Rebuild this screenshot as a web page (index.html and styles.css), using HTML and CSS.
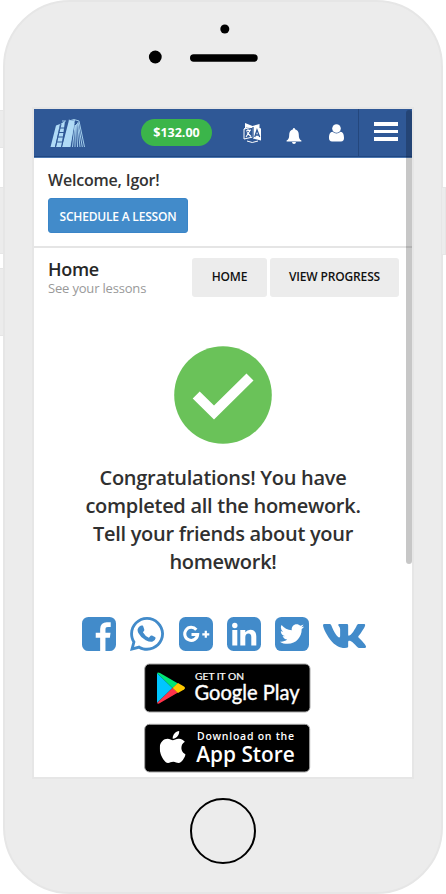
FILE: index.html
```html
<!DOCTYPE html>
<html lang="en">
<head>
<meta charset="utf-8">
<title>Home</title>
<link rel="stylesheet" href="styles.css">
</head>
<body>
<div class="phone">
  <span class="side-button mute"></span>
  <span class="side-button volume-up"></span>
  <span class="side-button volume-down"></span>
  <span class="side-button power"></span>
  <div class="phone-top">
    <svg width="436" height="105" viewBox="5 2 436 105"><circle cx="224.8" cy="29" r="4.5"/><circle cx="155.3" cy="57" r="6.4"/><rect x="190" y="54.3" width="67.7" height="7.5" rx="3.7"/></svg>
  </div>
  <main class="screen">
    <header class="topbar">
      <svg class="logo" width="36" height="30" viewBox="0 0 36 30">
        <path fill="#b0dbf6" d="M.5 29 6 7.500 10 6 5 29ZM6 29 10.500 6 15 3 11.500 29ZM12 29 18.500 4 19 1l1 2 5-1L20 29Z"/>
        <path fill="none" stroke="#b0dbf6" stroke-width=".9" d="M19 3Q24 0 29 3L34.500 29M20 29 24 5M22.500 29 25 7M25 29 25.500 7M27.500 29 26.500 6M30 29 27.500 5M32.300 29 28 4M12 3l4 0"/>
        <path fill="none" stroke="#2f5896" d="M10 10h5M9 14.500h6M8 19h6M7 24h6M5.500 29 11 6M11.500 29 16.500 6"/>
      </svg>
      <span class="balance">$132.00</span>
      <svg class="translate" width="19" height="21" viewBox="0 0 19 21">
        <path fill="#fff" d="M2 0 9.500 3 16.500 1v4l1.500 .5v12L10 15.500V5L2 4.500Z"/>
        <path fill="none" stroke="#fff" d="M2.500 3v2L1 6v10l9-2V4L1 6M4 18q5 3 11 0"/>
        <path fill="none" stroke="#fff" stroke-width="1.100" d="M3 8l5-1M5 6v2M7 7.500 3 14M4 9.500l4 4"/>
        <path fill="none" stroke="#2f5896" stroke-width="1.300" d="M11.700 14 14 7l2.700 7M12.500 12h3.500M10 4v11"/>
      </svg>
      <svg class="bell" width="16" height="17" viewBox="0 0 16 17"><path fill="#fff" d="M8 0q1 0 1 1.200C12 2 12.800 4.500 12.800 7c0 3 .8 4.700 2.600 5.500v1H.6v-1C2.400 11.700 3.200 10 3.200 7 3.200 4.500 4 2 7 1.200 7 .3 7.300 0 8 0ZM6 14h4q-.2 2-2 2t-2-2Z"/></svg>
      <svg class="user" width="15" height="18" viewBox="0 0 15 18"><path fill="#fff" d="M3.500 7.800C1 8 0 10.500 0 14c0 2.300 1 3.500 3 3.500h9c2 0 3-1.200 3-3.500 0-3.500-1-6-3.500-6.200q-4 3.200-8 0Z"/><circle cx="7.500" cy="4.500" r="4.300" fill="#fff"/></svg>
      <span class="menu"><i></i><i></i><i></i></span>
    </header>
    <section class="welcome">
      <h2>Welcome, Igor!</h2>
      <a class="schedule">SCHEDULE A LESSON</a>
    </section>
    <section class="heading">
      <div class="title"><h1>Home</h1><p>See your lessons</p></div>
      <a class="tab home">HOME</a><a class="tab progress">VIEW PROGRESS</a>
    </section>
    <section class="done">
      <svg class="check" width="98" height="98" viewBox="0 0 98 98"><circle cx="49" cy="49" r="48.800" fill="#6ac259"/><path fill="#fff" d="M18.700 52.500 25.700 45.500 40 59.500 72.500 27.500 79.500 34.500 40 73.500Z"/></svg>
      <p class="message">Congratulations! You have<br>completed all the homework.<br>Tell your friends about your<br>homework!</p>
    </section>
    <nav class="social">
      <svg width="34" height="34" viewBox="128 128 1536 1536"><path d="M1376 128q119 0 203.500 84.500t84.500 203.500v960q0 119-84.500 203.500t-203.500 84.500h-188v-595h199l30-232h-229v-148q0-56 23.500-84t91.500-28l122-1v-207q-63-9-178-9-136 0-217.500 80t-81.500 226v171h-200v232h200v595h-532q-119 0-203.500-84.500t-84.500-203.500v-960q0-119 84.500-203.500t203.500-84.500h960z"/></svg>
      <svg width="34" height="34" viewBox="0 32 448 448"><path d="M380.900 97.100C339 55.100 283.200 32 223.900 32c-122.400 0-222 99.600-222 222 0 39.100 10.200 77.300 29.600 111L0 480l117.700-30.900c32.400 17.700 68.900 27 106.100 27h.1c122.300 0 224.100-99.600 224.100-222 0-59.300-25.200-115-67.100-157zm-157 341.600c-33.200 0-65.700-8.900-94-25.700l-6.700-4-69.800 18.300L72 359.200l-4.400-7c-18.500-29.400-28.200-63.300-28.200-98.200 0-101.700 82.800-184.500 184.600-184.500 49.300 0 95.600 19.200 130.400 54.100 34.800 34.900 56.200 81.200 56.100 130.500 0 101.800-84.900 184.600-186.600 184.600z"/><path d="M128 155q18-18 36-10 8 3 11 12l13 40q4 10-5 20l-13 16q28 50 79 73l22-26q9-9 19-4l38 19q11 6 9 18-4 32-38 43-35 11-92-18-66-35-97-96-28-53 18-87Z"/></svg>
      <svg width="34" height="34" viewBox="0 0 34 34"><rect width="34" height="34" rx="6.500"/><path fill="none" stroke="#fff" stroke-width="3" d="M17.300 12.800A6.500 6.500 0 1 0 18.700 17.500H12.500"/><path fill="none" stroke="#fff" stroke-width="2.200" d="M26.800 13.800v7M23.300 17.300h7"/></svg>
      <svg width="34" height="34" viewBox="0 0 34 34"><rect width="34" height="34" rx="6.500"/><circle cx="7.800" cy="8.500" r="2.700" fill="#fff"/><path fill="#fff" d="M5.300 13h5v15.500h-5zM13.300 13h5v2.200q1.700-2.500 5-2.500c4 0 6 2.500 6 6.800v9h-5v-8.300c0-2.500-.9-3.700-2.800-3.700-2.100 0-3.200 1.500-3.200 3.700v8.300h-5z"/></svg>
      <svg width="34" height="34" viewBox="0 32 448 448"><rect y="32" width="448" height="448" rx="84"/><path fill="#fff" d="M351.100 190.800c.2 2.800.2 5.700.2 8.500 0 86.700-66 186.600-186.600 186.600-37.200 0-71.700-10.800-100.700-29.400 5.300.6 10.400.8 15.800.8 30.700 0 58.900-10.400 81.400-28-28.800-.6-53-19.500-61.300-45.500 10.100 1.500 19.200 1.500 29.600-1.200-30-6.100-52.500-32.500-52.500-64.400v-.8c8.700 4.900 18.900 7.900 29.600 8.300a65.400 65.400 0 0 1-29.200-54.600c0-12.200 3.200-23.400 8.900-33.100 32.300 39.800 80.800 65.800 135.200 68.600-9.300-44.500 24-80.600 64-80.600 18.900 0 35.900 7.900 47.900 20.700 14.800-2.800 29-8.300 41.600-15.800-4.900 15.200-15.200 28-28.800 36.100 13.200-1.400 26-5.100 37.800-10.200-8.900 13.100-20.100 24.700-32.900 34z"/></svg>
      <svg class="vk" width="43" height="24" viewBox="18 96 539 320" preserveAspectRatio="none"><path d="M545 117.700c3.700-12.500 0-21.700-17.800-21.700h-58.900c-15 0-21.900 7.900-25.600 16.700 0 0-30 73.100-72.400 120.500-13.700 13.700-20 18.100-27.500 18.100-3.700 0-9.400-4.400-9.400-16.900V117.700c0-15-4.200-21.700-16.600-21.700h-92.600c-9.400 0-15 7-15 13.500 0 14.200 21.200 17.500 23.400 57.500v86.800c0 19-3.400 22.500-10.900 22.500-20 0-68.600-73.400-97.400-157.400-5.800-16.300-11.500-22.900-26.600-22.900H38.800c-16.800 0-20.200 7.900-20.200 16.700 0 15.600 20 93.100 93.100 195.500C160.400 378.100 229 416 291.400 416c37.500 0 42.100-8.400 42.100-22.900 0-66.800-3.400-73.100 15.400-73.100 8.700 0 23.700 4.400 58.700 38.100 40 40 46.600 57.900 69 57.900h58.900c16.800 0 25.300-8.400 20.400-25-11.200-34.900-86.900-106.700-90.300-111.500-8.700-11.200-6.200-16.200 0-26.200.1-.1 72-101.300 79.400-135.600z"/></svg>
    </nav>
    <div class="stores">
      <svg class="store" width="167" height="50" viewBox="144 663 167 50">
        <rect x="144.700" y="664" width="165.300" height="48" rx="4.800" fill="#000" stroke="#a6a6a6"/>
        <path fill="#00c6ff" d="M157 673v30l15.500-15z"/><path fill="#00e676" d="M157 673q1-1 3 0l18 10.500-5.500 4.500z"/><path fill="#ff334b" d="M157 703q1 1.500 3 0l18-10.500-5.500-4.500z"/><path fill="#ffc800" d="m172.500 688 5.500-5 6 3.500q2 1.500 0 3l-6 3.500z"/>
        <text class="small-play" x="195" y="679.700" textLength="49" lengthAdjust="spacingAndGlyphs">GET IT ON</text>
        <text class="big-play" x="194.500" y="700" textLength="105" lengthAdjust="spacingAndGlyphs">Google Play</text>
      </svg>
      <svg class="store" width="167" height="50" viewBox="144 723 167 50">
        <rect x="144.700" y="724.300" width="165" height="47.700" rx="4.800" fill="#000" stroke="#a6a6a6"/>
        <svg x="159.700" y="731" width="26" height="32" viewBox="4 32 377 448" preserveAspectRatio="none"><path fill="#fff" d="M318.700 268.700c-.2-36.700 16.400-64.400 50-84.800-18.800-26.900-47.200-41.700-84.700-44.600-35.500-2.800-74.300 20.700-88.500 20.700-15 0-49.400-19.700-76.400-19.700C63.300 141.200 4 184.800 4 273.500q0 39.300 14.400 81.200c12.800 36.700 59 126.700 107.200 125.200 25.200-.6 43-17.900 75.800-17.900 31.800 0 48.300 17.900 76.400 17.900 48.600-.7 90.400-82.500 102.600-119.300-65.200-30.700-61.700-90-61.700-91.900zm-56.600-164.200c27.300-32.400 24.800-61.900 24-72.500-24.100 1.400-52 16.400-67.900 34.900-17.500 19.800-27.800 44.300-25.600 71.900 26.100 2 49.900-11.400 69.500-34.300z"/></svg>
        <text class="small-app" x="197" y="740" textLength="97">Download on the</text>
        <text class="big-app" x="196.300" y="762" textLength="98.500" lengthAdjust="spacingAndGlyphs">App Store</text>
      </svg>
    </div>
    <span class="scrollbar"></span>
  </main>
  <div class="home-button"></div>
</div>
</body>
</html>
```
FILE: styles.css
```css
* { box-sizing: border-box; }
body { margin: 0; background: #fff; font-family: "Open Sans", sans-serif; font-weight: 600; overflow: hidden; }
h1, h2, p { margin: 0; }
svg { display: block; flex: none; }
.phone { position: relative; width: 440px; height: 894px; margin-left: 3px; background: #ececec; border: 2px solid #e6e6e6; border-radius: 67px; }
.phone-top { height: 105px; }
.side-button { position: absolute; left: -6px; width: 5px; background: #ececec; border: 1px solid #e6e6e6; }
.mute { top: 108px; height: 38px; }
.volume-up { top: 185px; height: 67px; }
.volume-down { top: 266px; height: 68px; }
.power { top: 185px; left: auto; right: -5px; height: 68px; }
.screen { position: relative; width: 382px; height: 672px; margin-left: 27px; border: 2px solid #e6e6e6; background: #fff; }
.topbar { display: flex; align-items: flex-start; height: 49px; padding-left: 16px; background: #2f5896; border-bottom: 1px solid #4c77b0; box-shadow: inset 0 -1px #204782; }
.logo { margin-top: 9px; }
.balance { width: 71px; height: 27px; margin: 10px 0 0 55px; border-radius: 14px; background: #3bb54a; color: #fff; font-size: 12.5px; font-weight: 700; line-height: 27px; text-align: center; }
.translate { margin: 14px 0 0 31px; }
.bell { margin: 19px 0 0 24px; }
.user { margin: 15px 0 0 27px; }
.menu { display: flex; flex-direction: column; gap: 4px; width: 54px; height: 47px; margin-left: 14px; padding: 13px 0 0 15px; border-left: 1px solid #24477d; }
.menu i { width: 24px; height: 3.600px; background: #fff; }
.welcome { height: 90px; padding: 11px 14px; border-bottom: 2px solid #e5e5e5; }
.welcome h2 { font-size: 16px; line-height: 22px; font-weight: 600; letter-spacing: -.2px; color: #333; white-space: nowrap; }
.schedule { display: block; width: 140px; height: 35px; margin-top: 7px; border-radius: 3px; background: #428bca; border: 1px solid #3a85c8; color: #fff; font-size: 12px; line-height: 35px; letter-spacing: -.2px; text-align: center; white-space: nowrap; }
.heading { display: flex; height: 55px; padding: 10px 0 0 14px; }
.title { width: 144px; margin-top: -1px; }
.title h1 { font-size: 18px; line-height: 24px; font-weight: 600; letter-spacing: -.3px; color: #272727; }
.title p { margin-top: -1px; font-size: 13px; line-height: 16px; font-weight: 400; letter-spacing: -.18px; color: #999; }
.tab { height: 39px; border-radius: 3px; background: #ececec; color: #111; font-size: 12px; line-height: 37px; letter-spacing: -.15px; text-align: center; }
.home { width: 75px; }
.progress { width: 129px; margin-left: 3px; }
.done { height: 275px; padding-top: 43px; }
.check { margin-left: 140px; }
.message { margin-top: 20px; font-size: 20px; line-height: 28px; letter-spacing: -.28px; color: #303030; text-align: center; white-space: nowrap; }
.social { display: flex; align-items: center; gap: 14.300px; height: 83px; padding: 28px 0 0 48px; fill: #428bca; }
.vk { margin-top: 4px; }
.stores { display: flex; flex-direction: column; gap: 10px; margin: 2px 0 0 110px; }
.store text { fill: #fff; }
.small-play { font: 400 9.800px Lato, sans-serif; stroke: #fff; stroke-width: .2px; }
.big-play { font: 400 21px Lato, sans-serif; stroke: #fff; stroke-width: .4px; }
.small-app { font: 600 10.500px "Open Sans", sans-serif; }
.big-app { font: 600 21.500px "Open Sans", sans-serif; }
.scrollbar { position: absolute; top: 1px; right: 0; width: 6px; height: 454px; border-radius: 3px; background: rgba(0, 0, 0, .22); }
.home-button { width: 66px; height: 66px; margin: 19px 0 0 185px; border: 2px solid #000; border-radius: 50%; }
```
